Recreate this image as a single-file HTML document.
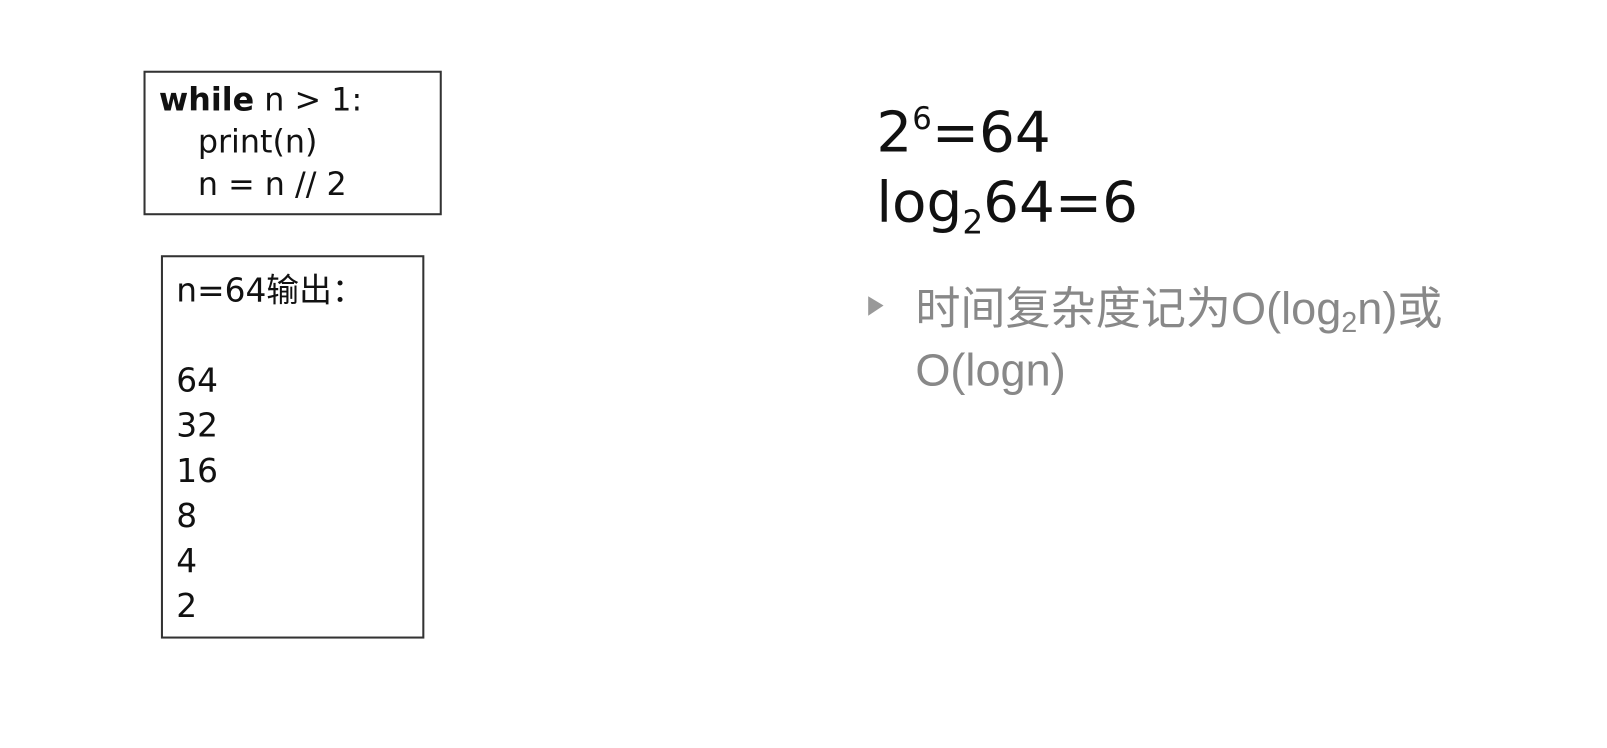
<!DOCTYPE html><html><head><style>
body{margin:0;width:1607px;height:748px;background:#fff;position:relative;overflow:hidden;font-family:"DejaVu Sans","Noto Sans CJK SC",sans-serif;color:#111}
#w{position:absolute;left:0;top:0;width:1568px;height:730px;transform:scale(1.025);transform-origin:0 0}
.a{position:absolute;white-space:nowrap}
.box{position:absolute;border:2px solid #333;box-sizing:border-box}
</style></head><body><div id="w">
<div class="box" style="left:140px;top:69px;width:291px;height:141px"></div>
<div class="a" style="left:155px;top:78px;font-size:31px;line-height:41px;letter-spacing:0">
<div><b>while</b> n &gt; 1:</div>
<div style="padding-left:38px">print(n)</div>
<div style="padding-left:38px">n = n // 2</div></div>
<div class="box" style="left:157px;top:249px;width:257px;height:374px"></div>
<div class="a" style="left:172px;top:261px;font-size:32px;line-height:44px">
<div>n=64输出：</div><div>&nbsp;</div><div>64</div><div>32</div><div>16</div><div>8</div><div>4</div><div>2</div></div>
<div class="a" style="left:855px;top:95px;font-size:55px;line-height:68px">
<div>2<sup style="font-size:30px;vertical-align:22px;line-height:0">6</sup>=64</div>
<div>log<sub style="font-size:32px;vertical-align:-12px;line-height:0">2</sub>64=6</div></div>
<svg class="a" style="left:846px;top:288px" width="18" height="22"><polygon points="1,1 16,10 1,20" fill="#999"/></svg>
<div class="a" style="left:893px;top:272px;font-size:44px;line-height:60px;color:#888;font-family:'Liberation Sans','Noto Sans CJK SC',sans-serif">
<div>时间复杂度记为O(log<sub style="font-size:28px;vertical-align:-8px;line-height:0">2</sub>n)或</div>
<div>O(logn)</div></div>
</div></body></html>
